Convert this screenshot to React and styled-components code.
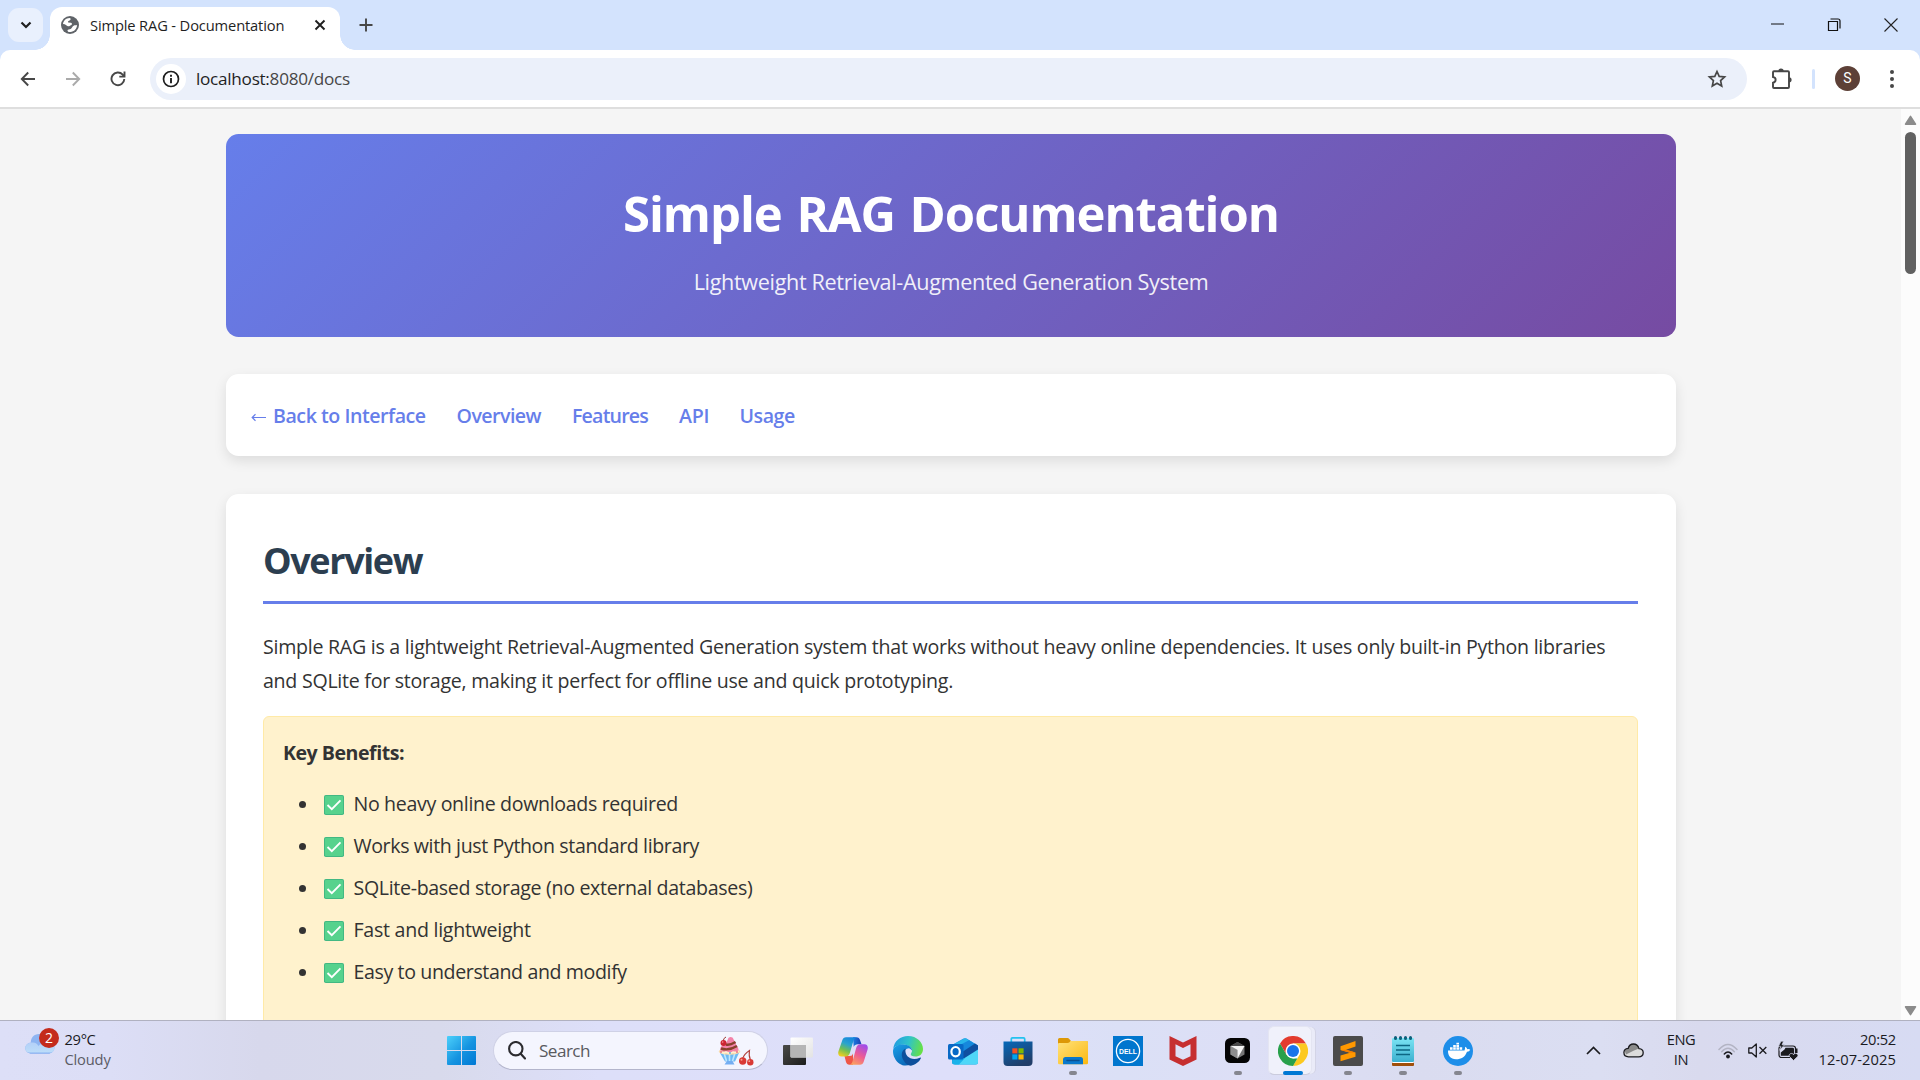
import React from "react";
import styled, { createGlobalStyle } from "styled-components";

const GlobalStyle = createGlobalStyle`
  * { box-sizing: border-box; }
  html, body { margin: 0; padding: 0; overflow: hidden; }
  body { font-family: "Open Sans", "Noto Sans", sans-serif; color: #333; }
  svg { display: block; flex: none; }
`;

const Desktop = styled.div`
  width: 1920px;
  height: 1080px;
  display: flex;
  flex-direction: column;
  overflow: hidden;
  background: #fff;
`;

/* ---------- Browser frame ---------- */

const TabStrip = styled.header`
  height: 50px;
  flex: none;
  display: flex;
  padding-left: 8px;
  background: #d3e3fd;
`;

const TabSearch = styled.button`
  width: 35px;
  height: 34px;
  margin: 8px 7px 0 0;
  border: 0;
  padding: 0;
  border-radius: 11px;
  background: #e9f0fd;
  display: grid;
  place-items: center;
`;

const Tab = styled.div`
  position: relative;
  width: 290px;
  height: 43px;
  margin-top: 7px;
  padding: 0 14px 7px 11px;
  border-radius: 12px 12px 0 0;
  background: #fff;
  display: flex;
  align-items: center;

  &::before,
  &::after {
    content: "";
    position: absolute;
    bottom: 0;
    width: 15px;
    height: 15px;
  }
  &::before {
    left: -15px;
    background: radial-gradient(circle at 0 0, transparent 14.5px, #fff 15px);
  }
  &::after {
    right: -15px;
    background: radial-gradient(circle at 100% 0, transparent 14.5px, #fff 15px);
  }
`;

const TabTitle = styled.span`
  flex: 1;
  margin-left: 11px;
  font-size: 14.7px;
  line-height: 20px;
  letter-spacing: -0.145px;
  color: #1f1f1f;
  white-space: nowrap;
`;

const NewTab = styled.button`
  margin: 15px 0 0 16px;
  width: 20px;
  height: 20px;
  padding: 0;
  border: 0;
  background: none;
  display: grid;
  place-items: center;
`;

const WindowButtons = styled.div`
  margin-left: auto;
  display: flex;
`;

const WindowButton = styled.button`
  width: ${(p) => p.$width}px;
  height: 49px;
  padding: 0;
  border: 0;
  background: none;
  display: grid;
  place-items: center;
`;

const ToolbarShell = styled.div`
  height: 59px;
  flex: none;
  background: #d3e3fd;
`;

const Toolbar = styled.nav`
  height: 59px;
  border-radius: 10px 10px 0 0;
  border-bottom: 2px solid #dedede;
  background: #fff;
  display: flex;
  align-items: center;
  padding: 0 19px 0 18px;
`;

const ToolButton = styled.button`
  width: 20px;
  height: 20px;
  padding: 0;
  border: 0;
  background: none;
  display: grid;
  place-items: center;
  margin-right: ${(p) => p.$gap || 0}px;
`;

const ExtensionButton = styled.button`
  width: 22px;
  height: 22px;
  padding: 0;
  border: 0;
  margin-left: 24px;
  background: none;
`;

const Omnibox = styled.div`
  width: 1597px;
  height: 42px;
  border-radius: 21px;
  background: #ebf0fa;
  display: flex;
  align-items: center;
  padding: 0 20px 0 6px;
`;

const SiteInfo = styled.span`
  width: 30px;
  height: 30px;
  border-radius: 50%;
  background: #fff;
  display: grid;
  place-items: center;
`;

const Address = styled.span`
  flex: 1;
  margin-left: 10px;
  padding-top: 1px;
  font-size: 17.15px;
  line-height: 24px;
  letter-spacing: -0.27px;
  color: #474747;
  b {
    font-weight: 400;
    color: #1f1f1f;
  }
`;

const ToolDivider = styled.span`
  width: 3px;
  height: 20px;
  margin: 0 20px 0 19px;
  border-radius: 2px;
  background: #d3e3fd;
`;

const Avatar = styled.span`
  width: 25px;
  height: 25px;
  margin-right: 26px;
  border-radius: 50%;
  background: #5d4037;
  color: #fff;
  font: 400 14px/25px Roboto, sans-serif;
  text-align: center;
`;

/* ---------- Documentation page ---------- */

const Viewport = styled.div`
  height: 911px;
  flex: none;
  display: flex;
  background: #f5f5f5;
`;

const Page = styled.main`
  flex: 1;
  height: 911px;
  overflow: hidden;
  padding: 25px 225px 0 226px;
`;

const ScrollTrack = styled.aside`
  width: 19px;
  background: #fcfcfc;
  display: flex;
  flex-direction: column;
  align-items: center;
  padding: 6px 0 4px;
`;

const ScrollThumb = styled.div`
  width: 11px;
  height: 142px;
  margin: 7px 0 auto;
  border-radius: 6px;
  background: #616161;
`;

const Hero = styled.section`
  height: 203px;
  padding-top: 48px;
  border-radius: 12.5px;
  background: linear-gradient(135deg, #667eea 0%, #764ba2 100%);
  color: #fff;
  text-align: center;
`;

const HeroTitle = styled.h1`
  margin: 0;
  font-size: 49px;
  line-height: 62px;
  font-weight: 700;
  letter-spacing: -1.04px;
  word-spacing: 3px;
`;

const HeroText = styled.p`
  margin: 23px 0 0;
  font-size: 21.6px;
  line-height: 30px;
  letter-spacing: -0.335px;
  opacity: 0.9;
`;

const Card = styled.section`
  border-radius: 12.5px;
  background: #fff;
  box-shadow: 0 5px 12.5px rgba(0, 0, 0, 0.1);
`;

const NavCard = styled(Card)`
  height: 82px;
  margin: 37px 0 38px;
  padding: 2px 25px 0;
  display: flex;
  align-items: center;
`;

const NavLink = styled.a`
  width: ${(p) => p.$width}px;
  margin-right: 30.5px;
  display: flex;
  align-items: center;
  white-space: nowrap;
  font-size: 19.6px;
  line-height: 32px;
  font-weight: 600;
  letter-spacing: ${(p) => p.$track}px;
  color: #667eea;
  svg {
    margin-right: 6px;
  }
`;

const Content = styled(Card)`
  height: 640px;
  padding: 44px 38px 0 37px;
`;

const SectionTitle = styled.h2`
  height: 66px;
  margin: 0 0 26px;
  border-bottom: 3px solid #667eea;
  font-size: 36px;
  line-height: 46px;
  font-weight: 700;
  letter-spacing: -1.4px;
  color: #2c3e50;
`;

const Lead = styled.p`
  margin: 0 0 18px;
  font-size: 19.6px;
  line-height: 34px;
  letter-spacing: -0.265px;
  white-space: nowrap;
`;

const Highlight = styled.div`
  height: 340px;
  padding: 19px;
  border: 1px solid #ffeaa7;
  border-radius: 6px;
  background: #fff2cd;
`;

const HighlightTitle = styled.strong`
  display: block;
  margin-bottom: 17px;
  font-size: 19.6px;
  line-height: 34px;
  font-weight: 700;
  letter-spacing: -0.49px;
`;

const BenefitList = styled.ul`
  margin: 0;
  padding: 0 0 0 16px;
  list-style: none;
  display: grid;
  gap: 8px;
`;

const Benefit = styled.li`
  display: flex;
  align-items: center;
  height: 34px;
  font-size: 19.6px;
  line-height: 34px;
  letter-spacing: ${(p) => p.$track}px;

  &::before {
    content: "";
    width: 7px;
    height: 7px;
    margin: 1px 18px 0 0;
    border-radius: 50%;
    background: #333;
  }
  svg {
    margin: 1px 9.500px 0 0;
  }
`;

/* ---------- Taskbar ---------- */

const Taskbar = styled.footer`
  height: 60px;
  flex: none;
  border-top: 1px solid #b0b1c0;
  display: flex;
  align-items: center;
  background: linear-gradient(
    90deg,
    #dddff7 0,
    #dcdef6 110px,
    #d7d8ec 260px,
    #d8daec 440px,
    #dddff9 600px,
    #dedffa 960px,
    #dbe0f6 1120px,
    #dddff6 1250px,
    #dadcf0 1420px,
    #dbdef2 1600px,
    #d9daee 1700px,
    #d7dbf3 1920px
  );
`;

const Weather = styled.div`
  width: 421px;
  padding-left: 25px;
  display: flex;
`;

const WeatherIcon = styled.div`
  position: relative;
  width: 39.5px;
  height: 40px;
  margin-top: 2px;
`;

const Badge = styled.span`
  position: absolute;
  left: 14px;
  top: -3px;
  width: 20px;
  height: 20px;
  border-radius: 50%;
  background: #c42b1c;
  color: #fff;
  font-size: 14px;
  line-height: 20px;
  text-align: center;
`;

const TwoLines = styled.div`
  display: flex;
  flex-direction: column;
  align-items: ${(p) => p.$align || "flex-start"};
  width: ${(p) => p.$width || "auto"};
  padding-bottom: ${(p) => p.$lift}px;
`;

const SmallText = styled.span`
  font-size: 14.7px;
  line-height: 20px;
  letter-spacing: ${(p) => p.$track || 0}px;
  color: ${(p) => (p.$muted ? "#5b5c66" : "#1a1a1f")};
`;

const StartButton = styled.button`
  width: 72px;
  height: 59px;
  padding: 0 0 0 26px;
  border: 0;
  background: none;
  display: flex;
  align-items: center;
`;

const SearchPill = styled.div`
  width: 275px;
  height: 39px;
  padding: 0 13px 0 14px;
  border: 1px solid #cfd1e6;
  border-bottom-color: #b3b5cc;
  border-radius: 20px;
  background: #f4f5fe;
  display: flex;
  align-items: center;
  span {
    flex: 1;
    margin-left: 13px;
    font-size: 17.15px;
    line-height: 24px;
    letter-spacing: -0.55px;
    color: #595a60;
  }
`;

const Apps = styled.div`
  display: flex;
  margin-left: 2px;
`;

const AppSlot = styled.div`
  position: relative;
  width: 55px;
  height: 59px;
  display: grid;
  place-items: center;
`;

const ActiveTile = styled.div`
  position: absolute;
  left: 3px;
  top: 5px;
  width: 44px;
  height: 49px;
  border: 1px solid #e4e5f2;
  border-bottom-color: #cbccdd;
  border-radius: 6px;
  background: #f0f1fb;
  box-shadow: 4px 0 0 -1px #eaebf8, 5px 0 0 -1px #d3d4e6;
`;

const AppGlyph = styled.div`
  position: relative;
`;

const Indicator = styled.span`
  position: absolute;
  bottom: 5px;
  left: ${(p) => (p.$active ? 17.5 : 23.5)}px;
  width: ${(p) => (p.$active ? 20 : 8)}px;
  height: 4px;
  border-radius: 2px;
  background: ${(p) => (p.$active ? "#0078d4" : "#85868f")};
`;

const Tray = styled.div`
  margin-left: auto;
  padding-right: 24px;
  display: flex;
  align-items: center;
`;

const TrayIcon = styled.span`
  width: ${(p) => p.$width}px;
  display: grid;
  place-items: center;
`;

/* ---------- Icons ---------- */

const Globe = () => (
  <svg width="18" height="18" viewBox="0 0 18 18">
    <circle cx="9" cy="9" r="9" fill="#5f6368" />
    <path d="M2 8C2.400 4.500 5 2 8.500 1.900C10 2 9.900 3.600 8.900 4.200C7.800 4.700 6.600 5.300 7.200 6.400L10 6.700C11.400 7.200 11.200 8.900 10 9.200C8.700 9.500 8.300 10.600 6.900 10.200C5.500 9.600 4.700 8.200 2 8Z" fill="#fff" />
    <path d="M12.600 9.700C13.600 9 15.200 9.700 16.100 9C16 12.600 13.200 15.800 9.400 16.100C7.700 16.200 6.400 15.700 6.500 14.300C6.700 13 8.600 13.600 9.700 13C11 12.300 11 10.600 12.600 9.700Z" fill="#fff" />
  </svg>
);

const Line = ({ w, h, d, color = "#474747", sw = 2, ...rest }) => (
  <svg width={w} height={h} viewBox={`0 0 ${w} ${h}`} fill="none" stroke={color} strokeWidth={sw} {...rest}>
    <path d={d} />
  </svg>
);

const Check = () => (
  <svg width="20" height="20" viewBox="0 0 20 20">
    <rect width="20" height="20" rx="1.800" fill="#42b883" />
    <rect x="1" y="1" width="18" height="18" rx="1" fill="#57d28d" />
    <path d="M3.500 10L7.800 14.200L16.500 5.400" fill="none" stroke="#fff" strokeWidth="1.900" />
  </svg>
);

const Cloud = () => (
  <svg width="30" height="24" viewBox="0 0 30 24">
    <defs>
      <linearGradient id="cl" x1="0" y1="0" x2="0" y2="1">
        <stop offset="0" stopColor="#b3d0f8" />
        <stop offset="0.850" stopColor="#bcdcf9" />
        <stop offset="1" stopColor="#7faaf0" />
      </linearGradient>
    </defs>
    <path d="M6 13C5 7 9 3 14 3C19 3 22 6 23 10C27 10 29.500 13 29.500 16C29.500 20 27 22.500 23 22.500L7 22.500C2.500 22.500 .3 20 .3 17C.3 14.500 2.500 12 6 11.500Z" fill="#8db4f2" />
    <path d="M7 11.500C10 11 12.500 13 13.500 15C16 11.500 21 11 24 12.500C27 12 29.500 13.500 29.500 16.500C29.500 20 27 22.500 23 22.500L7 22.500C2.500 22.500 .3 20 .3 17C.3 14 3 11.500 7 11.500Z" fill="url(#cl)" />
  </svg>
);

const Windows = () => (
  <svg width="29" height="29" viewBox="0 0 29 29">
    <defs>
      <linearGradient id="win" x1="0" y1="0" x2="1" y2="1">
        <stop offset="0" stopColor="#4cd0fb" />
        <stop offset="0.550" stopColor="#1593e0" />
        <stop offset="1" stopColor="#0078d4" />
      </linearGradient>
    </defs>
    <path d="M1 0H14V14H0V1Q0 0 1 0ZM15 0H28Q29 0 29 1V14H15ZM0 15H14V29H1Q0 29 0 28ZM15 15H29V28Q29 29 28 29H15Z" fill="url(#win)" />
  </svg>
);

const Sundae = () => (
  <svg width="36" height="30" viewBox="0 0 36 30">
    <path d="M2 17H21L17 25.500H7Z" fill="#6fb9f3" />
    <path d="M6 17L8.500 25M11.500 17V25M17 17L14.500 25" stroke="#bfe6ff" strokeWidth="1.600" />
    <path d="M9 25H14.500L16.500 28.500H6.500Z" fill="#74aef2" />
    <ellipse cx="11.500" cy="15.500" rx="10.800" ry="3.300" fill="#f8d9a8" />
    <path d="M2 14C2 10 6 9 8 7.500L10 3C10.500 .2 15 .3 15.600 3.500C16 5 18 6 18 8C18 9.500 21 11.500 20.500 14.500C16 17 6 17 2 14Z" fill="#f383a9" />
    <path d="M3 12.500C9 14.500 15 12.500 19 10M8 8.500C12 9.500 15 7.500 17.500 6" fill="none" stroke="#88422c" strokeWidth="2.400" />
    <path d="M2 15.500Q5 18 8 16Q12 18.500 15 16Q18 17.500 21 15" fill="none" stroke="#fff0cf" strokeWidth="1.600" />
    <circle cx="3" cy="16" r=".9" fill="#e5657b" />
    <circle cx="12" cy="17" r=".9" fill="#56a1dd" />
    <circle cx="19" cy="16" r=".9" fill="#e5657b" />
    <path d="M5 5Q6 1.500 8 1" fill="none" stroke="#9b3a31" />
    <circle cx="5.500" cy="7" r="3" fill="#cc2533" />
    <circle cx="4.700" cy="6" r=".8" fill="#f99" />
    <path d="M24.500 23Q26 18 31.500 14.500Q30.500 20 32.500 24" fill="none" stroke="#b1413c" strokeWidth="1.100" />
    <circle cx="24.700" cy="25" r="3.700" fill="#d93a35" />
    <circle cx="32.300" cy="26.300" r="3.200" fill="#d93a35" />
    <circle cx="23.500" cy="23.800" r="1" fill="#f7a08f" />
    <circle cx="31.300" cy="25.200" r=".9" fill="#f7a08f" />
  </svg>
);

const TaskView = () => (
  <svg width="30" height="30" viewBox="0 0 30 30">
    <defs>
      <linearGradient id="tvd" x1="0" y1="0" x2="1" y2="1">
        <stop offset="0" stopColor="#4a4a48" />
        <stop offset="1" stopColor="#1c1c1c" />
      </linearGradient>
      <linearGradient id="tvl" x1="0" y1="0" x2="1" y2="1">
        <stop offset="0" stopColor="#fff" />
        <stop offset="1" stopColor="#e3e3e3" />
      </linearGradient>
    </defs>
    <rect x="0" y="9" width="23" height="20" rx="1" fill="url(#tvd)" />
    <rect x="7.500" y="1.500" width="22.500" height="20" rx="1" fill="url(#tvl)" />
    <path d="M7.500 9H23V21.500H8.500Q7.500 21.500 7.500 20.500Z" fill="#b5b5b5" />
  </svg>
);

const Copilot = () => (
  <svg width="30" height="30" viewBox="0 0 30 30">
    <defs>
      <linearGradient id="cp1" x1="0.600" y1="0" x2="0.200" y2="1">
        <stop offset="0" stopColor="#1687dd" />
        <stop offset="0.350" stopColor="#2aa4cd" />
        <stop offset="0.650" stopColor="#6fbf55" />
        <stop offset="1" stopColor="#f5cf1d" />
      </linearGradient>
      <linearGradient id="cp2" x1="0.700" y1="0" x2="0.200" y2="1">
        <stop offset="0" stopColor="#a14be8" />
        <stop offset="0.500" stopColor="#ee5c94" />
        <stop offset="1" stopColor="#fba35c" />
      </linearGradient>
      <linearGradient id="cp3" x1="0" y1="0" x2="1" y2="0">
        <stop offset="0" stopColor="#1a7ee0" />
        <stop offset="1" stopColor="#1b3fb4" />
      </linearGradient>
    </defs>
    <path d="M15 1.200H18.500C20.500 1.200 21.500 2.500 22 4L23.500 8.200H20C17.500 8.200 16.500 9 15.700 11Z" fill="url(#cp3)" />
    <path d="M15 28.800H11.500C9.500 28.800 8.500 27.500 8 26L6.500 20H10.500C13 20 14 20 15 17.500Z" fill="#ef5648" />
    <path d="M8 1.200H18.500C16.500 1.500 16 3 15.500 4.500L12 16.500C11.300 19 10 20.500 7.500 20.500H3.500C.6 20.500 -.3 18 .4 15.500L4.200 4.500C5 2.300 6 1.200 8 1.200Z" fill="url(#cp1)" />
    <path d="M22 28.800H11.500C13.500 28.500 14 27 14.500 25.500L18 12.500C18.700 9.800 20 8.200 22.500 8.200H26.500C29.400 8.200 30.300 10.700 29.600 13.500L25.800 25.500C25 27.700 24 28.800 22 28.800Z" fill="url(#cp2)" />
  </svg>
);

const Edge = () => (
  <svg width="30" height="30" viewBox="0 0 30 30">
    <defs>
      <linearGradient id="ed1" x1="0" y1="0.300" x2="1" y2="0.500">
        <stop offset="0" stopColor="#219be2" />
        <stop offset="0.500" stopColor="#30c3c9" />
        <stop offset="1" stopColor="#67e144" />
      </linearGradient>
      <linearGradient id="ed2" x1="0" y1="0" x2="0.600" y2="1">
        <stop offset="0" stopColor="#1ba0e8" />
        <stop offset="1" stopColor="#0a66b7" />
      </linearGradient>
    </defs>
    <path d="M.2 13C1 5 7.500 0 15 0C24 0 30 6.500 30 13C30 18 26.500 20.500 22.500 20.500C19 20.500 17.500 19.200 17.800 18C18.200 17 19 16.500 19 14.800C19 11 15 8.700 10.500 8.700C5.500 8.700 1.500 10.500 .2 13Z" fill="url(#ed1)" />
    <path d="M.1 14C1 10.500 5 8.600 10 8.600C15.500 8.600 19 11.500 19 14.500L17.500 13C16.500 11.500 13.500 12 12 14.500C9 19.500 14 25.500 21 25.500C17 31 6.500 32 1.700 22C.3 19.300 -.2 16.500 .1 14Z" fill="url(#ed2)" />
    <path d="M12.500 12.800C8 14.500 8.200 20 10 23.500C12 27.500 15.500 29.900 18 29.700C22 29.100 26.300 26 27.900 22.300C28 21.500 27.500 21.300 26.800 21.700C19 25.500 11.300 20.800 12.500 12.800Z" fill="#0d4f9c" />
  </svg>
);

const Outlook = () => (
  <svg width="30" height="30" viewBox="0 0 30 30">
    <path d="M4 9L15.500 2.500Q17 1.800 18.500 2.500L30 9.500V26Q30 28.500 27.500 28.500H7Q4 28.500 4 26Z" fill="#1a95e0" />
    <path d="M6 8L16 2.700Q17 2 18.500 2.800L27 8L12 17Z" fill="#29b5ea" />
    <path d="M21 4.300L27 8L14 17L12 9Z" fill="#1688dc" />
    <path d="M30 12.500V26Q30 28.500 27.500 28.500H7L5 27Z" fill="#4fd7f8" />
    <path d="M27 7.500L30 9.500V13.500L15 23V15.500Z" fill="#0f4fa0" />
    <path d="M5 22L17 22L11 28.500H7Q4 28.500 4 26Z" fill="#1ab2ea" />
    <rect x="0" y="8" width="15.500" height="15.500" rx="1.500" fill="#0869c6" />
    <ellipse cx="7.600" cy="15.700" rx="4.200" ry="4.700" fill="none" stroke="#fff" strokeWidth="2.200" />
  </svg>
);

const Store = () => (
  <svg width="30" height="30" viewBox="0 0 30 30">
    <defs>
      <linearGradient id="st" x1="0" y1="0" x2="0.500" y2="1">
        <stop offset="0" stopColor="#0669ba" />
        <stop offset="1" stopColor="#213e69" />
      </linearGradient>
    </defs>
    <path d="M8.300 6V3Q8.300 1.800 9.500 1.800H20.500Q21.700 1.800 21.700 3V6" fill="none" stroke="#23c2ef" strokeWidth="1.700" />
    <path d="M.5 5.500H29.500V26Q29.500 30 25.500 30H4.500Q.5 30 .5 26Z" fill="url(#st)" />
    <path d="M9.300 12.300H14.400V17.400H9.300Z" fill="#f25022" />
    <path d="M15.500 12.300H20.600V17.400H15.500Z" fill="#7fba00" />
    <path d="M9.300 18.400H14.400V23.500H9.300Z" fill="#00a4ef" />
    <path d="M15.500 18.400H20.600V23.500H15.500Z" fill="#ffb900" />
  </svg>
);

const Explorer = () => (
  <svg width="30" height="30" viewBox="0 0 30 30">
    <defs>
      <linearGradient id="ex" x1="0" y1="0" x2="1" y2="1">
        <stop offset="0" stopColor="#ffe27b" />
        <stop offset="1" stopColor="#fbb810" />
      </linearGradient>
    </defs>
    <path d="M0 3.500Q0 2 1.500 2H9.500Q10.500 2 11 2.800L13 5H28.500Q30 5 30 6.500V14H0Z" fill="#dd9806" />
    <path d="M0 8Q0 7 1 7H9.500Q10.800 7 11.500 6.200L12.500 5H28.800Q30 5 30 6.500V27Q30 28.300 28.700 28.300H1.300Q0 28.300 0 27Z" fill="url(#ex)" />
    <path d="M5 28.300V23.500Q5 21 7.500 21H22.500Q25 21 25 23.500V28.300Z" fill="#0a78cc" />
    <path d="M9 24.600H21" stroke="#0a4f90" strokeWidth="1.500" strokeLinecap="round" />
  </svg>
);

const Dell = () => (
  <svg width="30" height="30" viewBox="0 0 30 30">
    <rect width="30" height="30" fill="#0076ce" />
    <circle cx="15" cy="15" r="11.600" fill="none" stroke="#fff" strokeWidth="1.300" />
    <text x="15" y="17.900" textAnchor="middle" textLength="18" lengthAdjust="spacingAndGlyphs" fontFamily="Liberation Sans, sans-serif" fontWeight="700" fontSize="7.800" fill="#fff">DELL</text>
  </svg>
);

const McAfee = () => (
  <svg width="28" height="30" viewBox="0 0 28 30">
    <path d="M.5 0L14 6.500L27.500 0V23.500L14 30L.5 23.500Z" fill="#c62f30" />
    <path d="M6.500 8.300L14 12L21.500 8.300V20.200L14 23.700L6.500 20.200Z" fill="#dee0f6" />
  </svg>
);

const Cursor = () => (
  <svg width="25" height="25" viewBox="0 0 25 25">
    <rect width="25" height="25" rx="5.500" fill="#050505" />
    <path d="M12.500 4L19.500 8V16.500L12.500 20.500L5.500 16.500V8Z" fill="#777" />
    <path d="M12.500 4L19.500 8L12.500 12L5.500 8Z" fill="#4a4a4a" />
    <path d="M5.500 8L12.500 12V20.500L5.500 16.500Z" fill="#8d8d8d" />
    <path d="M5.500 8H19.500L12.500 20.500V12Z" fill="#f4f4f4" />
  </svg>
);

const Chrome = () => (
  <svg width="30" height="30" viewBox="0 0 30 30">
    <path d="M2 7.500A15 15 0 0 1 28 7.500H15L8.500 18.700Z" fill="#e33b2e" />
    <path d="M28 7.500A15 15 0 0 1 15 30L21.500 18.750L15 7.500Z" fill="#fcc91f" />
    <path d="M2 7.500L8.500 18.750L15 22.500H19.330L15 30A15 15 0 0 1 2 7.500Z" fill="#29a04b" />
    <circle cx="15" cy="15" r="7.500" fill="#fff" />
    <circle cx="15" cy="15" r="6" fill="#1b74ea" />
  </svg>
);

const Sublime = () => (
  <svg width="30" height="30" viewBox="0 0 30 30">
    <rect width="30" height="30" rx="2" fill="#4b4b4b" />
    <path d="M7.500 10.200L22.500 5V10.600L13 13.700L22.500 16.600V20.700L7.500 25.200V19.600L17 16.700L7.500 13.900Z" fill="#ff9800" />
    <path d="M7.500 13.900L13 13.700L22.500 16.600L17 16.700Z" fill="#f57c00" />
  </svg>
);

const Notepad = () => (
  <svg width="24" height="30" viewBox="0 0 24 30">
    <defs>
      <linearGradient id="np" x1="0" y1="0" x2="0" y2="1">
        <stop offset="0" stopColor="#7be4f4" />
        <stop offset="1" stopColor="#3cb0cf" />
      </linearGradient>
    </defs>
    <rect x="1" y="25" width="22" height="5" rx="1" fill="#a04f0b" />
    <rect x="1" y="2" width="22" height="25" rx="1" fill="#fff" />
    <rect x="1" y="2" width="22" height="24" rx="1" fill="url(#np)" />
    <path d="M5 9.500H19M5 14H19M5 18.500H19" stroke="#0c6683" strokeWidth="1.600" />
    <path d="M4.500 1.500V2.500M9.500 1.500V2.500M14.500 1.500V2.500M19.500 1.500V2.500" stroke="#0e617c" strokeWidth="3" strokeLinecap="round" />
  </svg>
);

const Docker = () => (
  <svg width="30" height="30" viewBox="0 0 30 30">
    <circle cx="15" cy="15" r="15" fill="#1d8ee9" />
    <path d="M5 14.500H21.500Q22.300 12.600 22 10.800Q24 11.500 24.300 13.200Q26 12.800 27.200 13.700Q26.300 15.800 24 15.700C22 21 18.500 23.200 13 23.200C7.500 23.200 4.800 19.500 5 14.500Z" fill="#fff" />
    <path d="M7 11.300H9.600V13.800H7ZM10.200 11.300H12.800V13.800H10.200ZM13.400 11.300H16V13.800H13.400ZM16.600 11.300H19.200V13.800H16.600ZM10.200 8.900H12.800V11H10.200ZM13.400 8.900H16V11H13.400ZM13.400 6.700H16V8.600H13.400Z" fill="#fff" />
  </svg>
);

const TrayCloud = () => (
  <svg width="21" height="15" viewBox="0 0 21 15">
    <path d="M5.500 13.800H15.500C18.500 13.800 20.200 12 20.200 9.700C20.200 7.500 18.500 5.800 16 5.600C15 2.500 13 1 10.500 1C7.700 1 5.800 2.800 5.200 5.300C2.500 5.500 .9 7.300 .9 9.600C.9 12 2.800 13.800 5.500 13.800Z" fill="#dcdcdc" />
    <path d="M1.500 7.500C2.500 5.800 4 5.300 5.200 5.300C5.800 2.800 7.700 1 10.500 1C13 1 15 2.500 16 5.600L11 7.500L3 11.500Z" fill="#8b8b8b" />
    <path d="M5.500 13.800H15.500C18.500 13.800 20.200 12 20.200 9.700C20.200 7.500 18.500 5.800 16 5.600C15 2.500 13 1 10.500 1C7.700 1 5.800 2.800 5.200 5.300C2.500 5.500 .9 7.300 .9 9.600C.9 12 2.800 13.800 5.500 13.800Z" fill="none" stroke="#1b1b1f" strokeWidth="1.300" />
  </svg>
);

const Wifi = () => (
  <svg width="20" height="16" viewBox="0 0 20 16" fill="none" strokeWidth="1.500" strokeLinecap="round">
    <path d="M1 6.500Q10 -3.500 19 6.500M3.700 8.800Q10 1.800 16.300 8.800" stroke="#b3b4c4" />
    <path d="M6.300 11Q10 6.800 13.700 11" stroke="#1b1b1f" />
    <circle cx="10" cy="13.500" r="1.900" fill="#1b1b1f" />
  </svg>
);

const Muted = () => (
  <svg width="19" height="15" viewBox="0 0 19 15" fill="none" stroke="#1b1b1f" strokeWidth="1.300">
    <path d="M.8 5H3.800L8.300 1V14L3.800 10H.8Z" strokeLinejoin="round" />
    <path d="M11.500 4L18.300 10.800M18.300 4L11.500 10.800" />
  </svg>
);

const Battery = () => (
  <svg width="21" height="20" viewBox="0 0 21 20">
    <rect x="1" y="5" width="16.500" height="11.500" rx="2.500" fill="none" stroke="#1b1b1f" strokeWidth="1.200" />
    <path d="M18 7.500H19.500V12H18Z" fill="#1b1b1f" />
    <path d="M7.500 6.800H14.500Q16 6.800 16 8V12.500L12 14.800H2.800V11.500L6.500 8.500Z" fill="#1b1b1f" />
    <path d="M3 .3L.5 5.300H3L1.500 9.300L6.500 3.800H4L5.500 .3Z" fill="#1b1b1f" stroke="#d9dbf0" strokeWidth=".6" />
    <path d="M15.500 19.500L11.500 15.500C10 13.500 13.500 11 15.500 13.500C17.500 11 21.500 13.500 19.500 15.700Z" fill="#1b1b1f" stroke="#d9dbf0" strokeWidth=".8" />
  </svg>
);

const ScrollArrow = ({ down }) => (
  <svg width="13" height="10" viewBox="0 0 13 10">
    <path d={down ? "M1.500 .8H11.500L6.500 8.700Z" : "M1.500 9.200H11.500L6.500 1.300Z"} fill="#8b8b8b" stroke="#8b8b8b" strokeWidth="1.500" strokeLinejoin="round" />
  </svg>
);

/* ---------- Data ---------- */

const links = [
  { label: "Overview", width: 85, track: -0.54 },
  { label: "Features", width: 76.5, track: -0.82 },
  { label: "API", width: 30, track: -0.3 },
  { label: "Usage", width: 55, track: -0.45 },
];

const benefits = [
  { label: "No heavy online downloads required", track: -0.34 },
  { label: "Works with just Python standard library", track: -0.385 },
  { label: "SQLite-based storage (no external databases)", track: -0.33 },
  { label: "Fast and lightweight", track: -0.27 },
  { label: "Easy to understand and modify", track: -0.385 },
];

const apps = [
  { id: "taskview", Icon: TaskView },
  { id: "copilot", Icon: Copilot },
  { id: "edge", Icon: Edge },
  { id: "outlook", Icon: Outlook },
  { id: "store", Icon: Store },
  { id: "explorer", Icon: Explorer, running: true },
  { id: "dell", Icon: Dell },
  { id: "mcafee", Icon: McAfee },
  { id: "cursor", Icon: Cursor, running: true },
  { id: "chrome", Icon: Chrome, running: true, active: true },
  { id: "sublime", Icon: Sublime, running: true },
  { id: "notepad", Icon: Notepad, running: true },
  { id: "docker", Icon: Docker, running: true },
];

export default function App() {
  return (
    <Desktop>
      <GlobalStyle />
      <TabStrip>
        <TabSearch aria-label="Search tabs">
          <Line w={12} h={8} d="M1.500 1.500L6 6L10.500 1.500" color="#1f1f1f" sw={2.2} />
        </TabSearch>
        <Tab>
          <Globe />
          <TabTitle>Simple RAG - Documentation</TabTitle>
          <Line w={12} h={12} d="M1.500 1.500L10.500 10.500M10.500 1.500L1.500 10.500" color="#1f1f1f" sw={1.9} />
        </Tab>
        <NewTab aria-label="New tab">
          <Line w={14} h={14} d="M7 .5V13.500M.5 7H13.500" sw={1.9} />
        </NewTab>
        <WindowButtons>
          <WindowButton $width={56} aria-label="Minimize">
            <Line w={13} h={3} d="M0 1H13" color="#111" sw={1} />
          </WindowButton>
          <WindowButton $width={57} aria-label="Restore">
            <Line w={14} h={14} d="M1.500 3.500H10.500V12.500H1.500ZM3.500 1H11Q13 1 13 3V10.500" color="#111" sw={1.2} />
          </WindowButton>
          <WindowButton $width={58} aria-label="Close">
            <Line w={14} h={14} d="M.5 .5L13.500 13.500M13.500 .5L.5 13.500" color="#222" sw={1.1} />
          </WindowButton>
        </WindowButtons>
      </TabStrip>
      <ToolbarShell>
        <Toolbar>
          <ToolButton $gap={25} aria-label="Back">
            <Line w={16} h={16} d="M15 8H2M8.200 1.500L1.800 8L8.200 14.500" sw={1.9} />
          </ToolButton>
          <ToolButton $gap={25} aria-label="Forward">
            <Line w={16} h={16} d="M1 8H14M7.800 1.500L14.200 8L7.800 14.500" color="#aaa" sw={1.9} />
          </ToolButton>
          <ToolButton $gap={22} aria-label="Reload">
            <Line w={16} h={16} d="M14.300 8A6.400 6.400 0 1 1 12.700 3.600L14 5M14.500 .5V5.600H9.300" sw={1.9} />
          </ToolButton>
          <Omnibox>
            <SiteInfo>
              <svg width="18" height="18" viewBox="0 0 18 18">
                <circle cx="9" cy="9" r="7.500" fill="none" stroke="#1f1f1f" strokeWidth="1.700" />
                <path d="M9 8V13.200M9 4.800V6.700" stroke="#1f1f1f" strokeWidth="1.900" />
              </svg>
            </SiteInfo>
            <Address>
              <b>localhost:</b>8080/docs
            </Address>
            <Line w={20} h={20} d="M10 2.500L12.200 7.400L17.600 8L13.600 11.600L14.700 17L10 14.200L5.300 17L6.400 11.600L2.400 8L7.800 7.400Z" sw={1.7} />
          </Omnibox>
          <ExtensionButton aria-label="Extensions">
            <svg width="22" height="22" viewBox="0 0 22 22">
              <path d="M2 4.300Q2 3.300 3 3.300H17Q18 3.300 18 4.300V19Q18 20 17 20H3Q2 20 2 19V14.800C5.500 14.200 5.500 9.500 2 9Z" fill="none" stroke="#474747" strokeWidth="1.900" />
              <path d="M7.300 3.300A2.700 2.700 0 0 1 12.700 3.300ZM18 9.200A2.600 2.600 0 0 1 18 14.400Z" fill="#474747" />
            </svg>
          </ExtensionButton>
          <ToolDivider />
          <Avatar>S</Avatar>
          <svg width="12" height="20" viewBox="0 0 12 20" fill="#474747">
            <circle cx="6" cy="3" r="2" />
            <circle cx="6" cy="10" r="2" />
            <circle cx="6" cy="17" r="2" />
          </svg>
        </Toolbar>
      </ToolbarShell>

      <Viewport>
        <Page>
          <Hero>
            <HeroTitle>Simple RAG Documentation</HeroTitle>
            <HeroText>Lightweight Retrieval-Augmented Generation System</HeroText>
          </Hero>
          <NavCard as="nav">
            <NavLink $width={175} $track={-0.46}>
              <Line w={16} h={12} d="M15 7.500H1.200M4.500 4.300L1.200 7.500L4.500 10.700" color="#667eea" sw={1.2} />
              Back to Interface
            </NavLink>
            {links.map((link) => (
              <NavLink key={link.label} $width={link.width} $track={link.track}>
                {link.label}
              </NavLink>
            ))}
          </NavCard>
          <Content>
            <SectionTitle>Overview</SectionTitle>
            <Lead>
              Simple RAG is a lightweight Retrieval-Augmented Generation system that works without heavy online
              dependencies. It uses only built-in Python libraries
              <br />
              and SQLite for storage, making it perfect for offline use and quick prototyping.
            </Lead>
            <Highlight>
              <HighlightTitle>Key Benefits:</HighlightTitle>
              <BenefitList>
                {benefits.map((item) => (
                  <Benefit key={item.label} $track={item.track}>
                    <Check />
                    {item.label}
                  </Benefit>
                ))}
              </BenefitList>
            </Highlight>
          </Content>
        </Page>
        <ScrollTrack>
          <ScrollArrow />
          <ScrollThumb />
          <ScrollArrow down />
        </ScrollTrack>
      </Viewport>

      <Taskbar>
        <Weather>
          <WeatherIcon>
            <Cloud />
            <Badge>2</Badge>
          </WeatherIcon>
          <TwoLines $lift={4}>
            <SmallText $track={-0.33}>29°C</SmallText>
            <SmallText $track={-0.18} $muted>Cloudy</SmallText>
          </TwoLines>
        </Weather>
        <StartButton aria-label="Start">
          <Windows />
        </StartButton>
        <SearchPill>
          <Line w={18} h={19} d="M14.500 7.700A6.700 6.700 0 1 1 1.100 7.700A6.700 6.700 0 1 1 14.500 7.700ZM12.500 12.500L17 17.500" color="#2b2b2f" sw={2.1} strokeLinecap="round" />
          <span>Search</span>
          <Sundae />
        </SearchPill>
        <Apps>
          {apps.map(({ id, Icon, running, active }) => (
            <AppSlot key={id}>
              {active && <ActiveTile />}
              <AppGlyph>
                <Icon />
              </AppGlyph>
              {running && <Indicator $active={active} />}
            </AppSlot>
          ))}
        </Apps>
        <Tray>
          <TrayIcon $width={38}>
            <Line w={15} h={9} d="M1 8L7.500 1.500L14 8" color="#1b1b1f" sw={1.7} />
          </TrayIcon>
          <TrayIcon $width={42}>
            <TrayCloud />
          </TrayIcon>
          <TwoLines $align="center" $width="54px" $lift={3}>
            <SmallText $track={-0.5}>ENG</SmallText>
            <SmallText $track={-0.3}>IN</SmallText>
          </TwoLines>
          <TrayIcon $width={40}>
            <Wifi />
          </TrayIcon>
          <TrayIcon $width={19}>
            <Muted />
          </TrayIcon>
          <TrayIcon $width={42}>
            <Battery />
          </TrayIcon>
          <TwoLines $align="flex-end" $width="87px" $lift={4}>
            <SmallText $track={-0.28}>20:52</SmallText>
            <SmallText $track={0.08}>12-07-2025</SmallText>
          </TwoLines>
        </Tray>
      </Taskbar>
    </Desktop>
  );
}
